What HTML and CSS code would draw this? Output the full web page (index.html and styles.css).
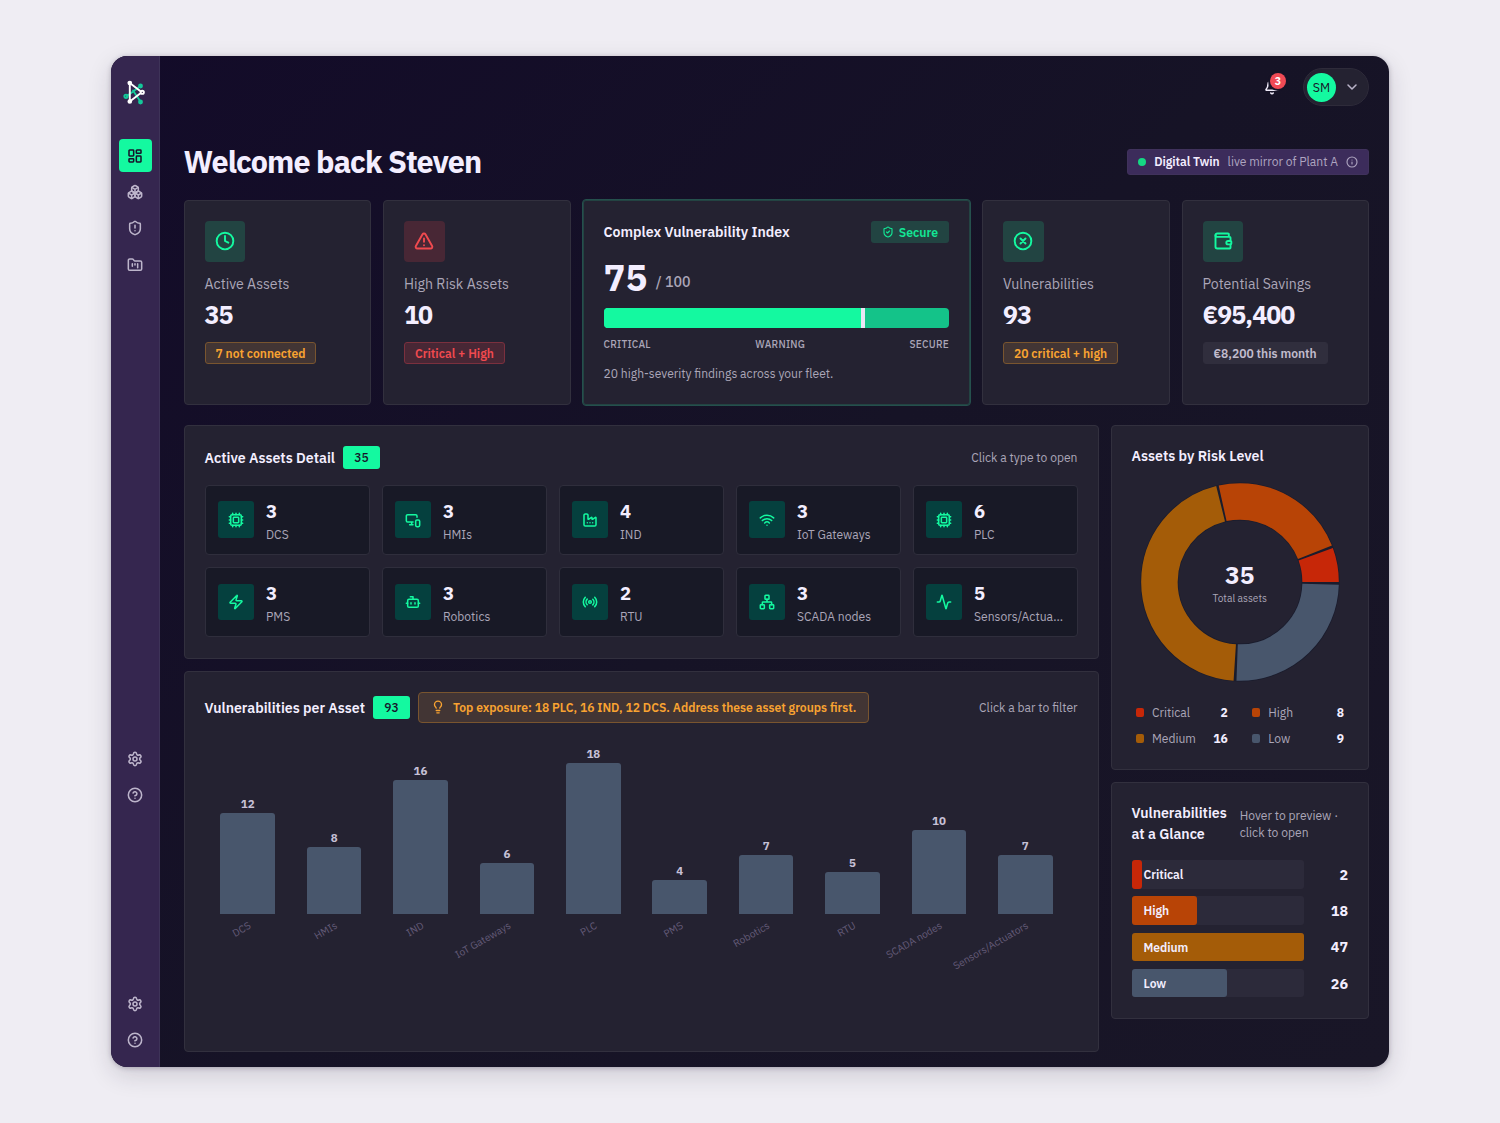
FILE: index.html
```html
<!DOCTYPE html>
<html lang="en">
<head>
    <meta charset="UTF-8">
    <meta name="viewport" content="width=device-width, initial-scale=1.0">
    <title>Dashboard</title>
    <link rel="stylesheet" href="styles.css">
</head>
<body>

<svg class="sprite">
    <symbol id="dashboard" viewBox="0 0 24 24"><rect width="7" height="9" x="3" y="3" rx="1"/><rect width="7" height="5" x="14" y="3" rx="1"/><rect width="7" height="9" x="14" y="12" rx="1"/><rect width="7" height="5" x="3" y="16" rx="1"/></symbol>
    <symbol id="boxes" viewBox="0 0 24 24"><path d="M2.97 12.92A2 2 0 0 0 2 14.63v3.24a2 2 0 0 0 .97 1.71l3 1.8a2 2 0 0 0 2.06 0L12 19v-5.5l-5-3-4.03 2.42Z"/><path d="m7 16.5-4.74-2.85M7 16.5l5-3M7 16.5v5.17"/><path d="M12 13.5V19l3.97 2.38a2 2 0 0 0 2.06 0l3-1.8a2 2 0 0 0 .97-1.71v-3.24a2 2 0 0 0-.97-1.71L17 10.5l-5 3Z"/><path d="m17 16.5-5-3M17 16.5l4.74-2.85M17 16.5v5.17"/><path d="M7.97 4.42A2 2 0 0 0 7 6.13v4.37l5 3 5-3V6.13a2 2 0 0 0-.97-1.71l-3-1.8a2 2 0 0 0-2.06 0l-3 1.8Z"/><path d="M12 8 7.26 5.15M12 8l4.74-2.85M12 13.5V8"/></symbol>
    <symbol id="shield-alert" viewBox="0 0 24 24"><path d="M20 13c0 5-3.5 7.5-7.66 8.95a1 1 0 0 1-.67-.01C7.5 20.5 4 18 4 13V6a1 1 0 0 1 1-1c2 0 4.5-1.2 6.24-2.72a1.17 1.17 0 0 1 1.52 0C14.51 3.81 17 5 19 5a1 1 0 0 1 1 1z"/><path d="M12 8v4M12 16h.01"/></symbol>
    <symbol id="shield-check" viewBox="0 0 24 24"><path d="M20 13c0 5-3.5 7.5-7.66 8.95a1 1 0 0 1-.67-.01C7.5 20.5 4 18 4 13V6a1 1 0 0 1 1-1c2 0 4.5-1.2 6.24-2.72a1.17 1.17 0 0 1 1.52 0C14.51 3.81 17 5 19 5a1 1 0 0 1 1 1z"/><path d="m9 12 2 2 4-4"/></symbol>
    <symbol id="folder" viewBox="0 0 24 24"><path d="M4 20h16a2 2 0 0 0 2-2V8a2 2 0 0 0-2-2h-7.93a2 2 0 0 1-1.66-.9l-.82-1.2A2 2 0 0 0 7.93 3H4a2 2 0 0 0-2 2v13c0 1.1.9 2 2 2Z"/><path d="M8 10v4M12 10v2M16 10v6"/></symbol>
    <symbol id="settings" viewBox="0 0 24 24"><path d="M9.671 4.136a2.34 2.34 0 0 1 4.659 0 2.34 2.34 0 0 0 3.319 1.915 2.34 2.34 0 0 1 2.33 4.033 2.34 2.34 0 0 0 0 3.831 2.34 2.34 0 0 1-2.33 4.033 2.34 2.34 0 0 0-3.319 1.915 2.34 2.34 0 0 1-4.659 0 2.34 2.34 0 0 0-3.32-1.915 2.34 2.34 0 0 1-2.33-4.033 2.34 2.34 0 0 0 0-3.831A2.34 2.34 0 0 1 6.35 6.051a2.34 2.34 0 0 0 3.319-1.915"/><circle cx="12" cy="12" r="3"/></symbol>
    <symbol id="help" viewBox="0 0 24 24"><circle cx="12" cy="12" r="10"/><path d="M9.09 9a3 3 0 0 1 5.83 1c0 2-3 3-3 3M12 17h.01"/></symbol>
    <symbol id="bell" viewBox="0 0 24 24"><path d="M10.268 21a2 2 0 0 0 3.464 0"/><path d="M3.262 15.326A1 1 0 0 0 4 17h16a1 1 0 0 0 .74-1.673C19.41 13.956 18 12.499 18 8A6 6 0 0 0 6 8c0 4.499-1.411 5.956-2.738 7.326"/></symbol>
    <symbol id="chevron" viewBox="0 0 24 24"><path d="m6 9 6 6 6-6"/></symbol>
    <symbol id="info" viewBox="0 0 24 24"><circle cx="12" cy="12" r="10"/><path d="M12 16v-4M12 8h.01"/></symbol>
    <symbol id="clock" viewBox="0 0 24 24"><circle cx="12" cy="12" r="10"/><path d="M12 6v6l4 2"/></symbol>
    <symbol id="alert" viewBox="0 0 24 24"><path d="m21.73 18-8-14a2 2 0 0 0-3.48 0l-8 14A2 2 0 0 0 4 21h16a2 2 0 0 0 1.73-3M12 9v4M12 17h.01"/></symbol>
    <symbol id="circle-x" viewBox="0 0 24 24"><circle cx="12" cy="12" r="10"/><path d="m15 9-6 6M9 9l6 6"/></symbol>
    <symbol id="wallet" viewBox="0 0 24 24"><path d="M19 7V4a1 1 0 0 0-1-1H5a2 2 0 0 0 0 4h15a1 1 0 0 1 1 1v4h-3a2 2 0 0 0 0 4h3a1 1 0 0 0 1-1v-2a1 1 0 0 0-1-1"/><path d="M3 5v14a2 2 0 0 0 2 2h15a1 1 0 0 0 1-1v-4"/></symbol>
    <symbol id="cpu" viewBox="0 0 24 24"><path d="M12 20v2M12 2v2M17 20v2M17 2v2M2 12h2M2 17h2M2 7h2M20 12h2M20 17h2M20 7h2M7 20v2M7 2v2"/><rect x="4" y="4" width="16" height="16" rx="2"/><rect x="8" y="8" width="8" height="8" rx="1"/></symbol>
    <symbol id="monitor" viewBox="0 0 24 24"><path d="M18 8V6a2 2 0 0 0-2-2H4a2 2 0 0 0-2 2v7a2 2 0 0 0 2 2h8M10 19v-3.96 3.15M7 19h5"/><rect width="6" height="10" x="16" y="12" rx="2"/></symbol>
    <symbol id="factory" viewBox="0 0 24 24"><path d="M12 16h.01M16 16h.01M8 16h.01"/><path d="M3 19a2 2 0 0 0 2 2h14a2 2 0 0 0 2-2V8.5a.5.5 0 0 0-.769-.422l-4.462 2.844A.5.5 0 0 1 15 10.5v-2a.5.5 0 0 0-.769-.422L9.77 10.922A.5.5 0 0 1 9 10.5V5a2 2 0 0 0-2-2H5a2 2 0 0 0-2 2z"/></symbol>
    <symbol id="wifi" viewBox="0 0 24 24"><path d="M12 20h.01M2 8.82a15 15 0 0 1 20 0M5 12.859a10 10 0 0 1 14 0M8.5 16.429a5 5 0 0 1 7 0"/></symbol>
    <symbol id="zap" viewBox="0 0 24 24"><path d="M4 14a1 1 0 0 1-.78-1.63l9.9-10.2a.5.5 0 0 1 .86.46l-1.92 6.02A1 1 0 0 0 13 10h7a1 1 0 0 1 .78 1.63l-9.9 10.2a.5.5 0 0 1-.86-.46l1.92-6.02A1 1 0 0 0 11 14z"/></symbol>
    <symbol id="bot" viewBox="0 0 24 24"><path d="M12 8V4H8"/><rect width="16" height="12" x="4" y="8" rx="2"/><path d="M2 14h2M20 14h2M15 13v2M9 13v2"/></symbol>
    <symbol id="radio" viewBox="0 0 24 24"><path d="M4.9 19.1C1 15.2 1 8.8 4.9 4.9M7.8 16.2c-2.3-2.3-2.3-6.1 0-8.5M16.2 7.8c2.3 2.3 2.3 6.1 0 8.5M19.1 4.9C23 8.8 23 15.1 19.1 19"/><circle cx="12" cy="12" r="2"/></symbol>
    <symbol id="network" viewBox="0 0 24 24"><rect x="16" y="16" width="6" height="6" rx="1"/><rect x="2" y="16" width="6" height="6" rx="1"/><rect x="9" y="2" width="6" height="6" rx="1"/><path d="M5 16v-3a1 1 0 0 1 1-1h12a1 1 0 0 1 1 1v3M12 12V8"/></symbol>
    <symbol id="activity" viewBox="0 0 24 24"><path d="M22 12h-2.48a2 2 0 0 0-1.93 1.46l-2.35 8.36a.25.25 0 0 1-.48 0L9.24 2.18a.25.25 0 0 0-.48 0l-2.35 8.36A2 2 0 0 1 4.49 12H2"/></symbol>
    <symbol id="bulb" viewBox="0 0 24 24"><path d="M15 14c.2-1 .7-1.7 1.5-2.5 1-.9 1.5-2.2 1.5-3.5A6 6 0 0 0 6 8c0 1 .2 2.2 1.5 3.5.7.7 1.3 1.5 1.5 2.5M9 18h6M10 22h4"/></symbol>
</svg>

<div class="app">
    <aside class="sidebar">
        <svg class="logo" viewBox="0 0 24 26">
            <g class="logo-green"><path d="M3.5 16.3 9.5 12l8-6M10 10.5 17.8 22"/><circle cx="3" cy="16.3" r="1.7"/><circle class="dot" cx="17.5" cy="6" r="1.5"/><circle class="dot" cx="17.5" cy="22" r="1.5"/></g>
            <g class="logo-white"><path d="M6.8 3v18.5l12-9.2Z"/><circle class="dot" cx="6.8" cy="3" r="1.4"/><circle class="dot" cx="6.8" cy="21.5" r="1.4"/><circle class="hole" cx="19.3" cy="12.3" r="1.6"/></g>
        </svg>
        <nav class="nav">
            <a class="nav-item active"><svg><use href="#dashboard"/></svg></a>
            <a class="nav-item"><svg><use href="#boxes"/></svg></a>
            <a class="nav-item"><svg><use href="#shield-alert"/></svg></a>
            <a class="nav-item"><svg><use href="#folder"/></svg></a>
        </nav>
        <nav class="nav nav-middle">
            <a class="nav-item"><svg><use href="#settings"/></svg></a>
            <a class="nav-item"><svg><use href="#help"/></svg></a>
        </nav>
        <nav class="nav nav-bottom">
            <a class="nav-item"><svg><use href="#settings"/></svg></a>
            <a class="nav-item"><svg><use href="#help"/></svg></a>
        </nav>
    </aside>

    <main class="content">
        <header class="topbar">
            <div class="bell"><svg><use href="#bell"/></svg><span class="bell-count">3</span></div>
            <div class="user"><span class="avatar">SM</span><svg><use href="#chevron"/></svg></div>
        </header>

        <div class="heading">
            <h1>Welcome back Steven</h1>
            <div class="twin">
                <i class="twin-dot"></i><strong>Digital Twin</strong><span>live mirror of Plant A</span>
                <svg><use href="#info"/></svg>
            </div>
        </div>

        <section class="stats">
            <div class="card">
                <div class="stat-icon"><svg><use href="#clock"/></svg></div>
                <div class="stat-label">Active Assets</div>
                <div class="stat-value">35</div>
                <span class="chip orange">7 not connected</span>
            </div>
            <div class="card">
                <div class="stat-icon red"><svg><use href="#alert"/></svg></div>
                <div class="stat-label">High Risk Assets</div>
                <div class="stat-value">10</div>
                <span class="chip red">Critical + High</span>
            </div>
            <div class="card index-card">
                <div class="row">
                    <h2>Complex Vulnerability Index</h2>
                    <span class="secure"><svg><use href="#shield-check"/></svg>Secure</span>
                </div>
                <div class="score"><b>75</b><span>/ 100</span></div>
                <div class="meter"><div class="meter-fill" style="width: 75%"></div></div>
                <div class="scale"><span>CRITICAL</span><span>WARNING</span><span>SECURE</span></div>
                <p class="index-note">20 high-severity findings across your fleet.</p>
            </div>
            <div class="card">
                <div class="stat-icon"><svg><use href="#circle-x"/></svg></div>
                <div class="stat-label">Vulnerabilities</div>
                <div class="stat-value">93</div>
                <span class="chip orange">20 critical + high</span>
            </div>
            <div class="card">
                <div class="stat-icon"><svg><use href="#wallet"/></svg></div>
                <div class="stat-label">Potential Savings</div>
                <div class="stat-value">€95,400</div>
                <span class="chip">€8,200 this month</span>
            </div>
        </section>

        <div class="columns">
            <div class="col-left">
                <section class="card assets">
                    <div class="row">
                        <h2>Active Assets Detail</h2><span class="count">35</span>
                        <span class="hint">Click a type to open</span>
                    </div>
                    <div class="tiles">
                        <div class="tile"><div class="tile-icon"><svg><use href="#cpu"/></svg></div><div class="tile-text"><b>3</b><span>DCS</span></div></div>
                        <div class="tile"><div class="tile-icon"><svg><use href="#monitor"/></svg></div><div class="tile-text"><b>3</b><span>HMIs</span></div></div>
                        <div class="tile"><div class="tile-icon"><svg><use href="#factory"/></svg></div><div class="tile-text"><b>4</b><span>IND</span></div></div>
                        <div class="tile"><div class="tile-icon"><svg><use href="#wifi"/></svg></div><div class="tile-text"><b>3</b><span>IoT Gateways</span></div></div>
                        <div class="tile"><div class="tile-icon"><svg><use href="#cpu"/></svg></div><div class="tile-text"><b>6</b><span>PLC</span></div></div>
                        <div class="tile"><div class="tile-icon"><svg><use href="#zap"/></svg></div><div class="tile-text"><b>3</b><span>PMS</span></div></div>
                        <div class="tile"><div class="tile-icon"><svg><use href="#bot"/></svg></div><div class="tile-text"><b>3</b><span>Robotics</span></div></div>
                        <div class="tile"><div class="tile-icon"><svg><use href="#radio"/></svg></div><div class="tile-text"><b>2</b><span>RTU</span></div></div>
                        <div class="tile"><div class="tile-icon"><svg><use href="#network"/></svg></div><div class="tile-text"><b>3</b><span>SCADA nodes</span></div></div>
                        <div class="tile"><div class="tile-icon"><svg><use href="#activity"/></svg></div><div class="tile-text"><b>5</b><span>Sensors/Actua...</span></div></div>
                    </div>
                </section>

                <section class="card per-asset">
                    <div class="row">
                        <h2>Vulnerabilities per Asset</h2><span class="count">93</span>
                        <span class="tip"><svg><use href="#bulb"/></svg>Top exposure: 18 PLC, 16 IND, 12 DCS. Address these asset groups first.</span>
                        <span class="hint">Click a bar to filter</span>
                    </div>
                    <div class="bars">
                        <div class="bar-col"><b>12</b><div class="bar" style="height: 100.3px"></div><span>DCS</span></div>
                        <div class="bar-col"><b>8</b><div class="bar" style="height: 66.8px"></div><span>HMIs</span></div>
                        <div class="bar-col"><b>16</b><div class="bar" style="height: 133.7px"></div><span>IND</span></div>
                        <div class="bar-col"><b>6</b><div class="bar" style="height: 50.1px"></div><span>IoT Gateways</span></div>
                        <div class="bar-col"><b>18</b><div class="bar" style="height: 150.4px"></div><span>PLC</span></div>
                        <div class="bar-col"><b>4</b><div class="bar" style="height: 33.4px"></div><span>PMS</span></div>
                        <div class="bar-col"><b>7</b><div class="bar" style="height: 58.5px"></div><span>Robotics</span></div>
                        <div class="bar-col"><b>5</b><div class="bar" style="height: 41.8px"></div><span>RTU</span></div>
                        <div class="bar-col"><b>10</b><div class="bar" style="height: 83.6px"></div><span>SCADA nodes</span></div>
                        <div class="bar-col"><b>7</b><div class="bar" style="height: 58.5px"></div><span>Sensors/Actuators</span></div>
                    </div>
                </section>
            </div>

            <div class="col-right">
                <section class="card risk">
                    <h2>Assets by Risk Level</h2>
                    <div class="donut">
                        <svg viewBox="-100 -100 200 200">
                            <circle class="ring" r="80.6"/>
                            <g class="slices">
                                <circle class="critical" r="80.6" pathLength="360" stroke-dasharray="20.1 339.9" stroke-dashoffset="0"/>
                                <circle class="high" r="80.6" pathLength="360" stroke-dasharray="80.9 279.1" stroke-dashoffset="-21.6"/>
                                <circle class="medium" r="80.6" pathLength="360" stroke-dasharray="162.2 197.8" stroke-dashoffset="-104"/>
                                <circle class="low" r="80.6" pathLength="360" stroke-dasharray="90.5 269.5" stroke-dashoffset="-267.9"/>
                            </g>
                        </svg>
                        <div class="donut-text"><b>35</b><span>Total assets</span></div>
                    </div>
                    <div class="legend">
                        <div><i class="critical"></i><span>Critical</span><b>2</b></div>
                        <div><i class="high"></i><span>High</span><b>8</b></div>
                        <div><i class="medium"></i><span>Medium</span><b>16</b></div>
                        <div><i class="low"></i><span>Low</span><b>9</b></div>
                    </div>
                </section>

                <section class="card glance">
                    <div class="glance-head">
                        <h2>Vulnerabilities<br>at a Glance</h2>
                        <p>Hover to preview ·<br>click to open</p>
                    </div>
                    <div class="level"><div class="track"><div class="fill critical" style="width: 6%"></div><span>Critical</span></div><b>2</b></div>
                    <div class="level"><div class="track"><div class="fill high" style="width: 38.3%"></div><span>High</span></div><b>18</b></div>
                    <div class="level"><div class="track"><div class="fill medium" style="width: 100%"></div><span>Medium</span></div><b>47</b></div>
                    <div class="level"><div class="track"><div class="fill low" style="width: 55.3%"></div><span>Low</span></div><b>26</b></div>
                </section>
            </div>
        </div>
    </main>
</div>

</body>
</html>
```
FILE: styles.css
```css
* {
    box-sizing: border-box;
}
body {
    margin: 0;
    height: 1123px;
    padding: 56px 111px;
    background: #efedf3;
    font-family: "IBM Plex Sans", Roboto, sans-serif;
    font-size: 12.1px;
    color: #f3eeff;
    overflow: hidden;
}
h1, h2, p {
    margin: 0;
}
svg {
    display: block;
    width: 16px;
    height: 16px;
    fill: none;
    stroke: currentColor;
    stroke-width: 2.3;
    stroke-linecap: round;
    stroke-linejoin: round;
}
.sprite {
    display: none;
}
.app {
    display: flex;
    width: 1278px;
    height: 1011px;
    border-radius: 16px;
    overflow: hidden;
    background: linear-gradient(135deg, #130b29, #161326 50%, #191627);
    box-shadow: 0 8px 24px rgba(30, 25, 50, 0.16), 0 1px 5px rgba(30, 25, 50, 0.25);
}

/* sidebar */
.sidebar {
    width: 49px;
    flex: none;
    display: flex;
    flex-direction: column;
    align-items: center;
    padding: 24px 0 10.5px;
    background: #35264f;
    border-right: 1px solid #3e3358;
    color: #bdb5cb;
}
.logo {
    width: 24px;
    height: 26px;
    stroke-width: 1.9;
}
.logo-green {
    stroke: #14c89a;
}
.logo-white {
    stroke: #fff;
}
.logo-green .dot {
    fill: #14c89a;
}
.logo-white .dot {
    fill: #fff;
}
.logo .hole {
    fill: #35264f;
}
.nav {
    display: flex;
    flex-direction: column;
    gap: 3.8px;
    margin-top: 33.4px;
}
.nav-middle {
    margin-top: auto;
    margin-bottom: 176px;
}
.nav-bottom {
    margin-top: 0;
}
.nav-item {
    width: 33px;
    height: 32.6px;
    display: flex;
    align-items: center;
    justify-content: center;
    border-radius: 4px;
}
.nav-item.active {
    background: #14f9a0;
    color: #17132a;
}

/* header */
.content {
    flex: 1;
    min-width: 0;
    padding: 0 20px 0 23.5px;
}
.topbar {
    display: flex;
    justify-content: flex-end;
    align-items: center;
    height: 62px;
}
.bell {
    position: relative;
    margin-right: 23px;
    color: #efeaf8;
}
.bell-count {
    position: absolute;
    left: 6px;
    top: -6px;
    width: 16px;
    height: 16px;
    border-radius: 50%;
    background: #f04a55;
    box-shadow: 0 0 0 2px #161326;
    color: #fff;
    font-size: 10.5px;
    font-weight: 700;
    line-height: 16px;
    text-align: center;
}
.user {
    display: flex;
    align-items: center;
    gap: 8px;
    width: 66px;
    height: 38px;
    padding-left: 3px;
    border: 1px solid #2e2b3a;
    border-radius: 19px;
    background: #242231;
    color: #b9b3c8;
}
.avatar {
    width: 29px;
    height: 29px;
    border-radius: 50%;
    background: #14f9a0;
    color: #17132a;
    font-size: 12.5px;
    line-height: 29px;
    text-align: center;
}
.heading {
    display: flex;
    justify-content: space-between;
    align-items: center;
    height: 42px;
    margin: 22px 0 18px;
}
h1 {
    font-size: 30.5px;
    font-weight: 700;
    letter-spacing: -0.9px;
}
.twin {
    display: flex;
    align-items: center;
    height: 26px;
    margin-top: 1px;
    padding: 0 10px;
    border: 1px solid #40325c;
    border-radius: 3px;
    background: #3c2c5b;
}
.twin-dot {
    width: 8px;
    height: 8px;
    margin-right: 8px;
    border-radius: 50%;
    background: #15d884;
}
.twin strong {
    font-weight: 600;
    letter-spacing: -0.08px;
}
.twin span {
    margin: 0 8px;
    color: #aea5c0;
}
.twin svg {
    width: 12px;
    height: 12px;
    color: #aea5c0;
}

/* cards */
.card {
    border: 1px solid #32303e;
    border-radius: 4px;
    background: #242231;
    padding: 20px;
}
h2 {
    font-size: 14.15px;
    font-weight: 600;
    line-height: 21px;
}
.row {
    display: flex;
    align-items: center;
}
.stats {
    display: grid;
    grid-template-columns: 187.5px 187.5px 1fr 187.5px 187.5px;
    gap: 12px;
    height: 204.5px;
}
.stat-icon {
    width: 40.5px;
    height: 40.5px;
    display: flex;
    align-items: center;
    justify-content: center;
    border-radius: 4px;
    background: #224442;
    color: #14f9a0;
}
.stat-icon svg {
    width: 20px;
    height: 20px;
}
.stat-icon.red {
    background: #482735;
    color: #f04a4f;
}
.stat-label {
    margin-top: 13.5px;
    font-size: 14.15px;
    line-height: 18px;
    color: #aba6b8;
}
.stat-value {
    margin-top: 8px;
    font-size: 25px;
    font-weight: 700;
    letter-spacing: -0.95px;
    line-height: 28px;
}
.chip {
    display: inline-block;
    height: 22px;
    margin-top: 13px;
    padding: 0 10px;
    border: 1px solid #302e3d;
    border-radius: 3px;
    background: #302e3d;
    color: #c1bccd;
    font-weight: 600;
    line-height: 21px;
}
.chip.orange {
    border-color: #79552f;
    background: #423534;
    color: #f9a331;
}
.chip.red {
    border-color: #7b303e;
    background: #482735;
    color: #f04a4f;
}
.index-card {
    margin: -1px;
    padding: 20px 21px;
    border-color: #25504d;
    box-shadow: inset 0 0 0 1px #234342;
}
.index-card .row {
    justify-content: space-between;
    height: 22px;
    margin-top: 1px;
}
.index-card h2 {
    margin-top: -2px;
}
.secure {
    display: flex;
    align-items: center;
    gap: 5px;
    height: 22px;
    padding: 0 11px;
    border-radius: 3px;
    background: #224442;
    color: #13e695;
    font-size: 12.2px;
    font-weight: 600;
}
.secure svg {
    width: 12px;
    height: 12px;
}
.score {
    display: flex;
    gap: 8.5px;
    height: 44px;
    margin-top: 14px;
    line-height: 42px;
}
.score b {
    font-size: 36.5px;
}
.score span {
    padding-top: 4px;
    color: #aba6b8;
    font-size: 14.2px;
    font-weight: 500;
}
.meter {
    height: 20px;
    margin-top: 7px;
    border-radius: 4px;
    background: #14c389;
    overflow: hidden;
}
.meter-fill {
    height: 100%;
    margin-left: 2px;
    border-right: 4px solid #e9e6f5;
    box-shadow: -2px 0 0 #14f9a0;
    background: #14f9a0;
}
.scale {
    display: flex;
    justify-content: space-between;
    margin-top: 9.5px;
    color: #aba6b8;
    font-size: 10.1px;
    font-weight: 500;
    letter-spacing: 0.25px;
    line-height: 14px;
}
.index-note {
    margin-top: 13px;
    color: #aba6b8;
    line-height: 18px;
}

/* main columns */
.columns {
    display: flex;
    gap: 12px;
    margin-top: 20px;
}
.col-left {
    flex: 1;
    min-width: 0;
}
.col-right {
    width: 258.5px;
}
.assets {
    height: 234px;
}
.count {
    width: 37px;
    height: 23px;
    margin-left: 8px;
    border-radius: 3px;
    background: #14f9a0;
    color: #17132a;
    font-weight: 500;
    line-height: 23px;
    text-align: center;
}
.hint {
    margin-left: auto;
    color: #aba6b8;
}
.tiles {
    display: grid;
    grid-template-columns: repeat(5, 1fr);
    grid-auto-rows: 70px;
    gap: 12.5px 12px;
    margin-top: 16px;
}
.tile {
    display: flex;
    align-items: center;
    gap: 12px;
    padding: 0 12px;
    border: 1px solid #2f2e3c;
    border-radius: 4px;
    background: #181926;
}
.tile-icon {
    width: 36.5px;
    height: 36.5px;
    flex: none;
    display: flex;
    align-items: center;
    justify-content: center;
    border-radius: 3px;
    background: #05403e;
    color: #14f9a0;
}
.tile-text b {
    display: block;
    margin-top: 4px;
    font-size: 18.5px;
    line-height: 25px;
}
.tile-text span {
    display: block;
    color: #aba6b8;
    line-height: 21px;
    white-space: nowrap;
}
.per-asset {
    height: 381px;
    margin-top: 12px;
}
.tip {
    display: flex;
    align-items: center;
    gap: 8px;
    height: 31px;
    margin-left: 8px;
    padding: 0 12px;
    border: 1px solid #79552f;
    border-radius: 4px;
    background: #423534;
    color: #f9a331;
    font-weight: 600;
    white-space: nowrap;
}
.tip svg {
    width: 14px;
    height: 14px;
}
.bars {
    display: grid;
    grid-template-columns: repeat(10, 1fr);
    height: 191px;
    margin-right: 9px;
}
.bar-col {
    position: relative;
    display: flex;
    flex-direction: column;
    align-items: center;
    justify-content: flex-end;
}
.bar-col b {
    color: #c6c0d6;
    font-size: 11.5px;
    line-height: 18px;
}
.bar {
    width: 54.5px;
    border-radius: 3px 3px 0 0;
    background: #48566c;
}
.bar-col span {
    position: absolute;
    right: 40.5px;
    top: 196.5px;
    color: #645c79;
    font-size: 10.2px;
    line-height: 12px;
    white-space: nowrap;
    transform: rotate(-30deg);
    transform-origin: 100% 50%;
}

/* risk donut */
.risk {
    height: 345px;
}
.risk h2 {
    margin-top: -1px;
}
.donut {
    position: relative;
    width: 200px;
    height: 200px;
    margin: 16px auto 0;
}
.donut svg {
    width: 200px;
    height: 200px;
    stroke-linecap: butt;
    stroke-width: 36.5;
}
.donut .ring {
    stroke: #1a1c2d;
    stroke-width: 38;
}
.slices {
    transform: scaleY(-1);
}
.donut .critical {
    stroke: #c72708;
}
.donut .high {
    stroke: #b84406;
}
.donut .medium {
    stroke: #a45c08;
}
.donut .low {
    stroke: #48566c;
}
.donut-text {
    position: absolute;
    inset: 0;
    display: flex;
    flex-direction: column;
    align-items: center;
    padding-top: 79px;
}
.donut-text b {
    font-size: 24.5px;
    line-height: 28px;
}
.donut-text span {
    color: #aba6b8;
    font-size: 10.2px;
    line-height: 19px;
}
.legend {
    display: grid;
    grid-template-columns: 1fr 1fr;
    gap: 8px 24px;
    margin: 22px 4px 0;
}
.legend div {
    display: flex;
    align-items: center;
    line-height: 18px;
}
.legend i {
    width: 8.5px;
    height: 8.5px;
    margin-right: 8px;
    border-radius: 2px;
}
.legend span {
    color: #aba6b8;
}
.legend b {
    margin-left: auto;
}
i.critical, .fill.critical {
    background: #c72708;
}
i.high, .fill.high {
    background: #b84406;
}
i.medium, .fill.medium {
    background: #a45c08;
}
i.low, .fill.low {
    background: #48566c;
}

/* vulnerabilities at a glance */
.glance {
    height: 237px;
    margin-top: 12.5px;
}
.glance-head {
    display: flex;
    gap: 13px;
    margin-bottom: 16px;
}
.glance-head h2 {
    margin-top: -1px;
}
.glance-head p {
    padding-top: 4px;
    color: #aba6b8;
    line-height: 17.3px;
    white-space: nowrap;
}
.level {
    display: flex;
    align-items: center;
    justify-content: space-between;
    margin-bottom: 7.8px;
}
.level b {
    font-size: 14.3px;
}
.track {
    position: relative;
    width: 172px;
    height: 28.5px;
    border-radius: 3px;
    background: #2c2a3a;
}
.fill {
    height: 100%;
    border-radius: 3px;
}
.track span {
    position: absolute;
    left: 12px;
    top: 1px;
    font-weight: 600;
    letter-spacing: -0.05px;
    line-height: 28.5px;
}
```
